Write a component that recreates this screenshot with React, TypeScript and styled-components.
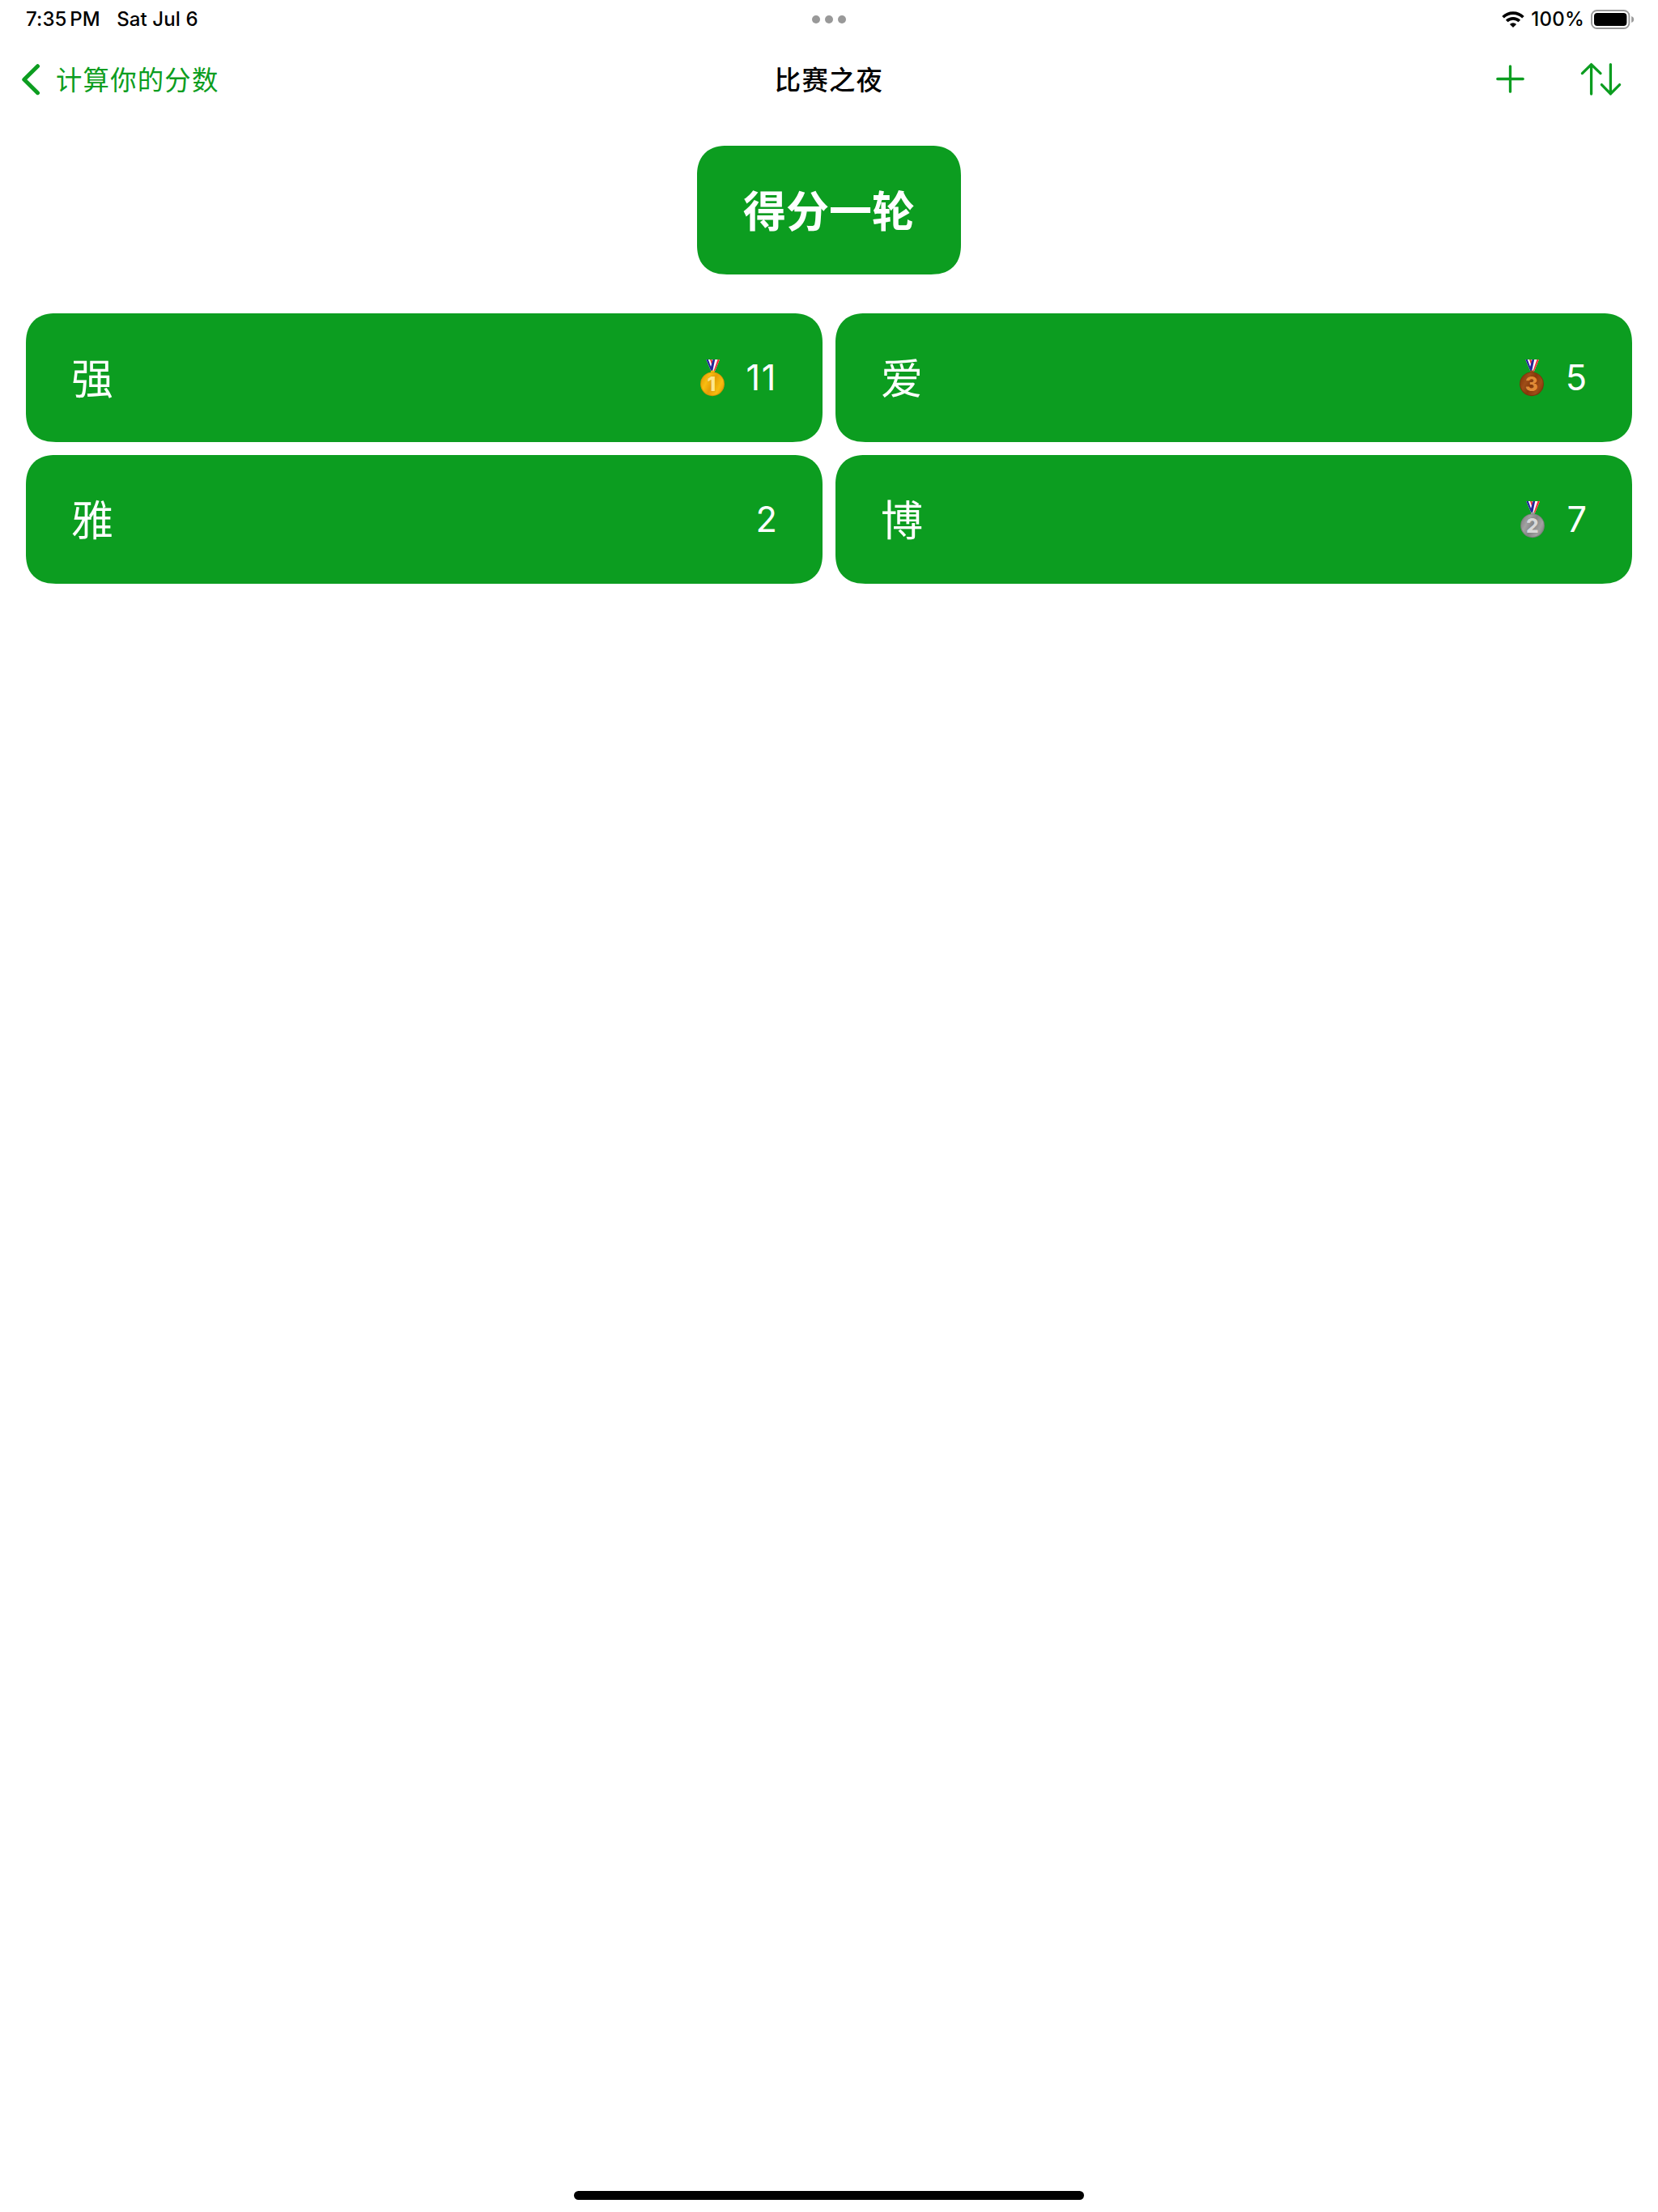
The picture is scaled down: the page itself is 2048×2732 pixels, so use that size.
import React from 'react';
import styled, { createGlobalStyle } from 'styled-components';

const GREEN = '#0c9d20';
const FONT = `Inter, "Noto Sans CJK SC", sans-serif`;

const GlobalStyle = createGlobalStyle`
  html, body { margin: 0; padding: 0; background: #fff; }
  * { box-sizing: border-box; }
  svg { display: block; flex: none; }
`;

const Page = styled.div`
  width: 2048px;
  height: 2732px;
  display: flex;
  flex-direction: column;
  background: #fff;
  font-family: ${FONT};
  color: #000;
  overflow: hidden;
`;

const StatusBar = styled.header`
  display: grid;
  grid-template-columns: 1fr auto 1fr;
  align-items: center;
  height: 48px;
  padding: 0 29px 0 32px;
  font-size: 24px;
  font-weight: 500;
  line-height: 48px;
  white-space: nowrap;
`;

const StatusLeft = styled.div`
  display: flex;
  gap: 20.5px;
`;

const Clock = styled.span`
  letter-spacing: 0.1px;
  word-spacing: -2.7px;
`;

const StatusDate = styled.span`
  letter-spacing: 0.1px;
`;

const Dots = styled.div`
  display: flex;
  gap: 6px;
  margin-right: 3px;
`;

const Dot = styled.i`
  width: 10px;
  height: 10px;
  border-radius: 50%;
  background: #999;
`;

const StatusRight = styled.div`
  display: flex;
  justify-content: flex-end;
  align-items: center;
`;

const Percent = styled.span`
  margin: 0 8px 0 8px;
  letter-spacing: 0.25px;
`;

const NavBar = styled.nav`
  display: grid;
  grid-template-columns: 1fr auto 1fr;
  align-items: center;
  height: 100px;
  padding: 0 24px;
  white-space: nowrap;
`;

const BackButton = styled.a`
  display: flex;
  align-items: center;
  gap: 17px;
  color: ${GREEN};
`;

const BackLabel = styled.span`
  padding-top: 4px;
  font-size: 32.4px;
  letter-spacing: 1.2px;
  line-height: 96px;
`;

const NavTitle = styled.h1`
  margin: 0;
  padding-top: 4px;
  font-size: 32.4px;
  font-weight: 500;
  letter-spacing: 1.2px;
  line-height: 96px;
`;

const NavActions = styled.div`
  display: flex;
  align-items: center;
  justify-content: flex-end;
  gap: 68px;
  margin-right: 20px;
  color: ${GREEN};
`;

const Main = styled.main`
  flex: 1;
  display: flex;
  flex-direction: column;
  align-items: center;
  gap: 48px;
  padding: 32px 32px 0;
`;

const Tile = styled.div`
  height: 159px;
  border-radius: 32px;
  background: ${GREEN};
  color: #fff;
  display: flex;
  align-items: center;
  @supports (corner-shape: squircle) {
    border-radius: 37px;
    corner-shape: superellipse(1.24);
  }
`;

const ScoreButton = styled(Tile)`
  width: 326px;
  justify-content: center;
  padding: 0 0 4px;
  font-size: 53px;
  font-weight: 700;
`;

const Players = styled.section`
  width: 100%;
  display: grid;
  grid-template-columns: 1fr 1fr;
  gap: 16px;
`;

const PlayerCard = styled(Tile)`
  padding: 0 56px;
`;

const PlayerName = styled.span`
  flex: 1;
  padding-top: 5px;
  font-size: 52px;
  line-height: 154px;
`;

const Score = styled.span<{ $wide: boolean }>`
  margin-left: 27px;
  font-size: 43.3px;
  font-weight: 400;
  letter-spacing: ${(p) => (p.$wide ? '1.6px' : '0')};
  line-height: 159px;
`;

const HomeArea = styled.footer`
  display: flex;
  justify-content: center;
  padding-bottom: 15px;
`;

const HomeIndicator = styled.div`
  width: 630px;
  height: 11px;
  border-radius: 6px;
  background: #000;
`;

type Place = 1 | 2 | 3;

const METALS: Record<Place, { light: string; base: string; edge: string; digit: string; shade: string }> = {
  1: { light: '#f8bd10', base: '#e69e06', edge: '#d89404', digit: '#fde68e', shade: '#b87a00' },
  2: { light: '#a2a2a2', base: '#858585', edge: '#7c7c7c', digit: '#d8d8d8', shade: '#6b6b6b' },
  3: { light: '#9e4d18', base: '#87390a', edge: '#7c3409', digit: '#e08a36', shade: '#642502' },
};

const Medal = ({ place }: { place: Place }) => {
  const m = METALS[place];
  const id = `metal${place}`;
  return (
    <svg width="30" height="46" viewBox="0 0 30 46">
      <defs>
        <linearGradient id={id} x1="0" y1="0.25" x2="1" y2="0.75">
          <stop offset="0" stopColor={m.base} />
          <stop offset="0.25" stopColor={m.light} />
          <stop offset="0.5" stopColor={m.base} />
          <stop offset="0.8" stopColor={m.light} />
          <stop offset="1" stopColor={m.base} />
        </linearGradient>
      </defs>
      <path d="M7.2 0H15l3 8-1.5 7h-3z" fill="#fff" />
      <path d="M7.2 0h2.6l5.4 14.5h-1.8z" fill="#25259a" />
      <path d="M12 0h2.4l1.6 5-1 4z" fill="#f2323a" />
      <path d="M15.6 0H24l-6 14.5h-4z" fill="#fff" />
      <path d="M21.4 0H24l-6 14.5h-1.6z" fill="#f2323a" />
      <path d="M15.6 0h2.6l-3 14.5h-1.6l-1-4z" fill="#25259a" />
      <rect x="13" y="13.4" width="4.6" height="3.2" rx="1.4" fill={m.light} />
      <circle cx="15" cy="30.3" r="14.9" fill={m.edge} />
      <circle cx="15" cy="30.1" r="13.9" fill={`url(#${id})`} />
      <text
        x={place === 1 ? 13.8 : 14.9}
        y="38.8"
        textAnchor="middle"
        fontFamily="Inter, sans-serif"
        fontSize="24.5"
        fontWeight="800"
        fill={m.digit}
        stroke={m.shade}
        strokeOpacity="0.3"
        strokeWidth="1"
        paintOrder="stroke"
      >
        {place}
      </text>
    </svg>
  );
};

const WifiIcon = () => (
  <svg width="28" height="20" viewBox="0 0 28 20">
    <g fill="none" stroke="#000" strokeWidth="3.7">
      <path d="M1.6 7.3a17.6 17.6 0 0 1 24.8 0" />
      <path d="M6.2 12a11.1 11.1 0 0 1 15.6 0" />
    </g>
    <path d="M14 20l-4.1-4.1a5.8 5.8 0 0 1 8.2 0z" fill="#000" />
  </svg>
);

const BatteryIcon = () => (
  <svg width="54" height="24" viewBox="0 0 54 24">
    <rect x="1" y="1" width="46.4" height="22" rx="6.6" fill="none" stroke="#999" strokeWidth="1.9" />
    <rect x="4" y="4" width="40.4" height="16" rx="4" fill="#000" />
    <path d="M50.2 8c2 .7 3 2.2 3 4s-1 3.3-3 4z" fill="#999" />
  </svg>
);

const ChevronIcon = () => (
  <svg width="28" height="40" viewBox="0 0 28 40">
    <path d="M22.5 3.7L5.8 20.2l16.7 16.5" fill="none" stroke="currentColor" strokeWidth="5" strokeLinecap="round" strokeLinejoin="round" />
  </svg>
);

const PlusIcon = () => (
  <svg width="36" height="36" viewBox="0 0 36 36">
    <path d="M17.5 1.8v31.4M1.8 17.5h31.4" fill="none" stroke="currentColor" strokeWidth="3.3" strokeLinecap="round" />
  </svg>
);

const SortIcon = () => (
  <svg width="52" height="42" viewBox="0 0 52 42">
    <path
      d="M13.6 39V2.6M2.4 13.6l11.2-11 11.4 11M37.4 2.6V39M26.4 27.6l11 11.2 11.2-11.2"
      fill="none"
      stroke="currentColor"
      strokeWidth="3.3"
      strokeLinecap="round"
      strokeLinejoin="round"
    />
  </svg>
);

const players: { name: string; score: number; place?: Place }[] = [
  { name: '强', score: 11, place: 1 },
  { name: '爱', score: 5, place: 3 },
  { name: '雅', score: 2 },
  { name: '博', score: 7, place: 2 },
];

export default function App() {
  return (
    <Page lang="zh-CN">
      <GlobalStyle />
      <StatusBar>
        <StatusLeft>
          <Clock>7:35 PM</Clock>
          <StatusDate>Sat Jul 6</StatusDate>
        </StatusLeft>
        <Dots>
          <Dot />
          <Dot />
          <Dot />
        </Dots>
        <StatusRight>
          <WifiIcon />
          <Percent>100%</Percent>
          <BatteryIcon />
        </StatusRight>
      </StatusBar>
      <NavBar>
        <BackButton>
          <ChevronIcon />
          <BackLabel>计算你的分数</BackLabel>
        </BackButton>
        <NavTitle>比赛之夜</NavTitle>
        <NavActions>
          <PlusIcon />
          <SortIcon />
        </NavActions>
      </NavBar>
      <Main>
        <ScoreButton>得分一轮</ScoreButton>
        <Players>
          {players.map((p) => (
            <PlayerCard key={p.name}>
              <PlayerName>{p.name}</PlayerName>
              {p.place && <Medal place={p.place} />}
              <Score $wide={p.score > 9}>{p.score}</Score>
            </PlayerCard>
          ))}
        </Players>
      </Main>
      <HomeArea>
        <HomeIndicator />
      </HomeArea>
    </Page>
  );
}
